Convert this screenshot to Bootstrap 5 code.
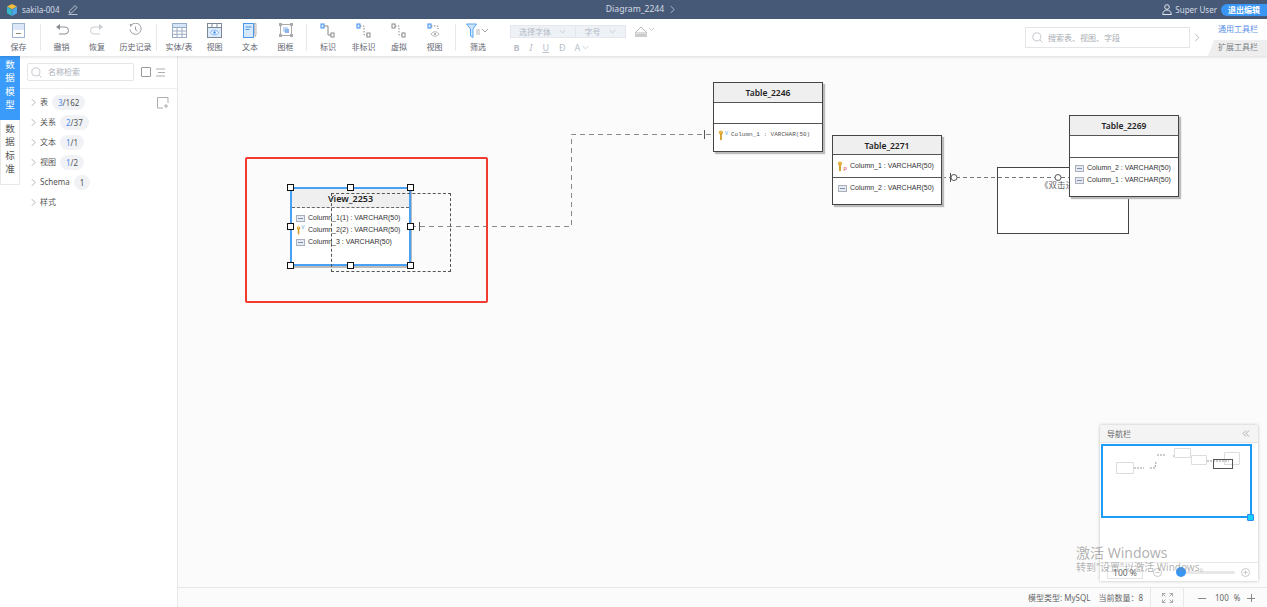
<!DOCTYPE html>
<html lang="zh-CN">
<head>
  <meta charset="UTF-8">
  <title>Diagram_2244</title>
  <link href="https://cdn.jsdelivr.net/npm/bootstrap@5.3.3/dist/css/bootstrap.min.css" rel="stylesheet">
  <style>
    html, body { height: 100%; overflow: hidden; }
    body { font-family: "Noto Sans", "Noto Sans CJK SC", sans-serif; font-size: 8.5px; color: #555; background: #fff; line-height: 1.2; }
    svg { display: block; }

    /* top bar */
    .app-top { height: 19px; background: #465a78; color: #d5dbe5; flex: none; }
    .top-side { flex: 1 1 0; }
    .top-exit { width: 46px; height: 12px; margin-left: 4px; background: #3a96f5; color: #fff; border-radius: 6px 0 0 6px; font-weight: 600; font-size: 8px; line-height: 12px; text-align: center; }

    /* toolbar */
    .app-tools { height: 37px; flex: none; background: #fff; box-shadow: 0 1px 3px rgba(0,0,0,.14); position: relative; z-index: 5; }
    .tool-item { width: 36px; height: 37px; padding-top: 4px; margin-right: -.5px; flex: none; }
    .tool-item.wide { width: 42px; }
    .tool-item.first { width: 37px; }
    .tool-item .tool-ico { height: 17px; }
    .tool-item .tool-txt { margin-top: 2px; font-size: 8px; color: #5f6670; white-space: nowrap; }
    .tool-sep { width: 1px; height: 27px; margin: 5px 3px 0; background: #e8e8e8; flex: none; }
    .font-sel { width: 66px; height: 13px; background: #eef1f6; border: 1px solid #e4e8ee; color: #b4bac4; font-size: 8px; }
    .font-sel.short { width: 50px; border-left: 0; }
    .font-row { color: #b9bec6; font-size: 9px; gap: 10px; padding-left: 4px; margin-top: 3px; height: 14px; }
    .tool-search { width: 165px; height: 21px; border: 1px solid #e3e5e8; color: #a9aeb5; font-size: 8px; padding-left: 6px; gap: 5px; background: #fff; }
    .tool-tabs { width: 59px; height: 37px; margin-left: 8px; }
    .tab-on { height: 21px; padding-top: 5px; padding-left: 10px; color: #5b8fe8; font-size: 8px; }
    .tab-off { height: 16px; padding-top: 2px; padding-left: 10px; color: #7b7f85; font-size: 8px; background: #eee; clip-path: polygon(6px 0, 100% 0, 100% 100%, 0 100%); }

    /* left rail + tree */
    .side-rail { width: 20px; flex: none; background: #fff; }
    .rail-tab { font-size: 9.5px; line-height: 13.3px; text-align: center; padding-top: 2px; height: 65px; border: 1px solid #e8e8e8; border-top: 0; color: #555; }
    .rail-tab.on { height: 64px; background: #3a9bfb; color: #fff; border: 0; }
    .side-tree { width: 158px; flex: none; border-right: 1px solid #e8e8e8; background: #fff; }
    .tree-head { height: 33px; padding: 7px 7px 0; border-bottom: 1px solid #eee; }
    .tree-search { width: 107px; height: 18px; border: 1px solid #e3e5e8; border-radius: 2px; gap: 6px; padding-left: 3px; color: #a9aeb5; font-size: 8px; }
    .tree-check { width: 10px; height: 10px; border: 1px solid #999; border-radius: 1px; margin-left: 7px; }
    .tree-row { height: 20px; padding-left: 11px; gap: 3px; color: #555; font-size: 8px; }
    .tree-row .tree-name { margin-left: 1px; }
    .tree-pill { background: #f0f2f5; color: #555; font-size: 8px; font-weight: 400; padding: 3px 6px; line-height: 9px; margin-left: 1px; }
    .tree-pill b { color: #4d8df0; font-weight: 400; }
    .tree-body { padding-top: 3px; position: relative; }
    .tree-add { position: absolute; left: 137px; top: 8px; }

    /* drawing area */
    .draw-area { background: #fbfbfb; position: relative; overflow: hidden; min-height: 0; }
    .draw-lines { position: absolute; left: 0; top: 0; }
    .er-box { position: absolute; width: 110px; background: #fff; border: 1px solid #444; box-shadow: 2px 2px 1px #bbb; font-family: "Liberation Sans", "Noto Sans CJK SC", sans-serif; color: #333; }
    .er-head { height: 20px; background: #efefef; border-bottom: 1px solid #555; text-align: center; font-family: "Noto Sans", sans-serif; font-weight: 600; font-size: 8.5px; line-height: 19px; color: #222; }
    .er-part { border-bottom: 1px solid #555; }
    .er-col { height: 12px; font-size: 7px; padding-left: 5px; gap: 2px; white-space: nowrap; line-height: 12px; }
    .er-mono { font-family: "Liberation Mono", monospace; font-size: 6px; color: #555; }
    .er-key { width: 11px; flex: none; }
    .er-view { border: 2px solid #4aa0f2; left: 112px; top: 131px; width: 121px; height: 79px; box-shadow: 1px 2px 0 #bbb; }
    .er-view .er-head { height: 19px; border-bottom: 1px dashed #666; font-size: 9px; }
    .er-note { position: absolute; left: 819px; top: 111px; width: 132px; height: 67px; background: #fff; border: 1px solid #444; font-size: 8.5px; padding-top: 12px; color: #666; }
    .er-note-txt { width: 71px; padding-left: 42px; overflow: hidden; white-space: nowrap; }
    .sel-dot { position: absolute; width: 7px; height: 7px; background: #fff; border: 1px solid #111; }
    .sel-ghost { position: absolute; left: 153px; top: 137px; width: 120px; height: 79px; border: 1px dashed #555; }
    .sel-red { position: absolute; left: 67px; top: 101px; width: 243px; height: 146px; border: 2px solid #f23b2f; border-radius: 2px; }

    /* navigator */
    .nav-panel { position: absolute; left: 922px; top: 369px; width: 158px; height: 156px; background: #fff; box-shadow: 0 0 3px rgba(0,0,0,.25); }
    .nav-head { height: 18px; padding: 0 8px 0 7px; background: #f4f4f4; border-bottom: 1px solid #e5e5e5; color: #666; font-size: 8px; }
    .nav-view { position: absolute; left: 1px; top: 19px; width: 151px; height: 74px; border: 2px solid #1e9bf5; }
    .nav-grip { position: absolute; left: 147px; top: 89px; width: 7px; height: 7px; border-radius: 1px; background: #19d3ff; border: 1px solid #2a8af0; }
    .nav-foot { position: absolute; left: 0; right: 0; bottom: 0; height: 19px; border-top: 1px solid #e8e8e8; padding-left: 7px; }
    .nav-zoom { width: 36px; height: 13px; border: 1px solid #e3e3e3; text-align: center; font-size: 8.5px; line-height: 11px; color: #666; }
    .nav-track { width: 59px; height: 3px; margin: 0 6px 0 14px; border-radius: 2px; background: #e8e8e8; position: relative; }
    .nav-thumb { position: absolute; left: 0; top: -4px; width: 10px; height: 10px; border-radius: 50%; background: #3a96f5; }
    .win-mark { position: absolute; left: 898px; top: 488px; color: rgba(130,130,130,.62); white-space: nowrap; pointer-events: none; }
    .win-mark .big { font-size: 14px; line-height: 17px; }
    .win-mark .sub { font-size: 10px; line-height: 13px; }

    /* status bar */
    .app-status { height: 20px; flex: none; border-top: 1px solid #e8e8e8; background: #fbfbfb; color: #666; font-size: 8px; }
    .stat-cell { height: 100%; border-left: 1px solid #e8e8e8; }
  </style>
</head>
<body class="d-flex flex-column">

  <svg width="0" height="0" class="position-absolute">
    <symbol id="i-key" viewBox="0 0 8 12">
      <circle cx="3.4" cy="2.6" r="2.4" fill="#e0a82e"/>
      <path d="M2.4 4h2v6.5l-1 1.2-1-1.2z" fill="#d29a22"/>
      <circle cx="3.4" cy="2" r=".7" fill="#fff3c8"/>
    </symbol>
    <symbol id="i-col" viewBox="0 0 9 7">
      <rect x=".5" y=".5" width="8" height="6" fill="#e6e9f0" stroke="#a9afbd"/>
      <path d="M2 3.5h5" stroke="#7d90b0"/>
    </symbol>
    <symbol id="i-rel" viewBox="0 0 16 16">
      <rect x="1" y="1" width="3" height="4" fill="#dcecff" stroke="#3d8ef0"/>
      <path d="M4 3h4v9h3" fill="none" stroke="#888"/>
      <rect x="11" y="10" width="3" height="4" fill="#fff" stroke="#888"/>
    </symbol>
    <symbol id="i-rel2" viewBox="0 0 16 16">
      <rect x="1" y="1" width="3" height="4" fill="#dcecff" stroke="#3d8ef0"/>
      <path d="M4 3h4v9h3" fill="none" stroke="#888" stroke-dasharray="1.5 1.5"/>
      <rect x="11" y="10" width="3" height="4" fill="#fff" stroke="#888"/>
    </symbol>
    <symbol id="i-rel3" viewBox="0 0 16 16">
      <rect x="1" y="1" width="3" height="4" fill="#fff" stroke="#888"/>
      <path d="M4 3h4v9h3" fill="none" stroke="#888" stroke-dasharray="1.5 1.5"/>
      <rect x="11" y="10" width="3" height="4" fill="#fff" stroke="#888"/>
    </symbol>
    <symbol id="i-chev" viewBox="0 0 6 10">
      <path d="M1 1l4 4-4 4" fill="none" stroke="currentColor" stroke-width=".9"/>
    </symbol>
    <symbol id="i-down" viewBox="0 0 10 6">
      <path d="M1 1l4 4 4-4" fill="none" stroke="currentColor" stroke-width=".9"/>
    </symbol>
    <symbol id="i-find" viewBox="0 0 12 12">
      <circle cx="5.3" cy="5.3" r="4.4" fill="none" stroke="#b7bcc3" stroke-width=".9"/>
      <path d="M8.5 8.5l3 3" stroke="#b7bcc3" stroke-width=".9"/>
    </symbol>
  </svg>

  <!-- top bar -->
  <div class="app-top d-flex align-items-center">
    <div class="top-side d-flex align-items-center" style="padding-left:6px">
      <svg width="12" height="12" viewBox="0 0 12 12">
        <path d="M6 0l5 2.6L6 5.2 1 2.6z" fill="#f1bd3d"/>
        <path d="M1 2.8l4.8 2.6V12L1 9.3z" fill="#35b6c9"/>
        <path d="M11 2.8L6.2 5.4V12L11 9.3z" fill="#4ca6e8"/>
      </svg>
      <span class="ms-1" style="font-size:8px">sakila-004</span>
      <svg class="ms-2" width="10" height="10" viewBox="0 0 10 10">
        <path d="M1 8l.5-2L7 .7 9 2.5 3.5 8zM.5 9.500h9" fill="none" stroke="#d5dbe5" stroke-width=".8"/>
      </svg>
    </div>
    <div class="d-flex align-items-center" style="gap:6px;font-size:8.6px;margin-left:8px">
      <span>Diagram_2244</span>
      <svg width="5" height="9" style="color:#d5dbe5"><use href="#i-chev"/></svg>
    </div>
    <div class="top-side d-flex align-items-center justify-content-end">
      <svg width="10" height="11" viewBox="0 0 10 11" style="margin-right:3px">
        <circle cx="5" cy="3" r="2.3" fill="none" stroke="#e2e6ec"/>
        <path d="M.7 10.500c0-6 8.600-6 8.600 0z" fill="none" stroke="#e2e6ec"/>
      </svg>
      <span style="font-size:8px">Super User</span>
      <div class="top-exit">退出编辑</div>
    </div>
  </div>

  <!-- toolbar -->
  <div class="app-tools d-flex">
    <div class="tool-item first text-center">
      <div class="tool-ico d-flex justify-content-center">
        <svg width="13" height="15" viewBox="0 0 13 15"><rect x=".5" y=".5" width="12" height="14" fill="#fff" stroke="#9fb4d2"/><rect x="1" y="1" width="11" height="6" fill="#dce8f8"/><path d="M4 10.500h5" stroke="#888"/></svg>
      </div>
      <div class="tool-txt">保存</div>
    </div>
    <div class="tool-sep"></div>
    <div class="tool-item text-center">
      <div class="tool-ico d-flex justify-content-center">
        <svg width="14" height="12" viewBox="0 0 14 12"><path d="M5 1L1 4l4 3z" fill="#8a8f96"/><path d="M5 4h5a3 3 0 010 7H4" fill="none" stroke="#8a8f96"/></svg>
      </div>
      <div class="tool-txt">撤销</div>
    </div>
    <div class="tool-item text-center">
      <div class="tool-ico d-flex justify-content-center">
        <svg width="14" height="12" viewBox="0 0 14 12"><path d="M9 1l4 3-4 3z" fill="#c8ccd1"/><path d="M9 4H4a3 3 0 000 7h6" fill="none" stroke="#c8ccd1"/></svg>
      </div>
      <div class="tool-txt">恢复</div>
    </div>
    <div class="tool-item wide text-center">
      <div class="tool-ico d-flex justify-content-center">
        <svg width="13" height="13" viewBox="0 0 13 13"><path d="M2 2.500A5.600 5.600 0 111 6.500" fill="none" stroke="#9a9ea4"/><path d="M.5 1l3 .5-2 2.500z" fill="#9a9ea4"/><path d="M6.500 3.500v3.200l2 1.300" fill="none" stroke="#9a9ea4"/></svg>
      </div>
      <div class="tool-txt">历史记录</div>
    </div>
    <div class="tool-sep" style="margin-left:0;margin-right:4px"></div>
    <div class="tool-item text-center">
      <div class="tool-ico d-flex justify-content-center">
        <svg width="15" height="15" viewBox="0 0 15 15"><rect x=".5" y=".5" width="14" height="14" fill="#fff" stroke="#9aabc4"/><rect x="1" y="1" width="13" height="3" fill="#d6e4f7"/><path d="M.5 4.500h14M.5 8h14M.5 11.300h14M5 4v10.500M10 4v10.500" stroke="#9aabc4" fill="none"/></svg>
      </div>
      <div class="tool-txt">实体/表</div>
    </div>
    <div class="tool-item text-center">
      <div class="tool-ico d-flex justify-content-center">
        <svg width="15" height="15" viewBox="0 0 15 15"><rect x=".5" y=".5" width="14" height="14" fill="#fff" stroke="#7d8896"/><path d="M.5 4.500h14M5 .5v4M10 .5v4" stroke="#7d8896"/><rect x="1" y="5" width="13" height="9" fill="#dcebfb"/><path d="M3.500 9.500c2-3 6-3 8 0-2 3-6 3-8 0z" fill="#fff" stroke="#3d8ef0" stroke-width=".7"/><circle cx="7.500" cy="9.500" r="1.200" fill="#3d8ef0"/></svg>
      </div>
      <div class="tool-txt">视图</div>
    </div>
    <div class="tool-item text-center">
      <div class="tool-ico d-flex justify-content-center">
        <svg width="15" height="15" viewBox="0 0 15 15"><rect x=".5" y=".5" width="10" height="14" fill="#d6e8fb" stroke="#4a97ec"/><path d="M2.500 4h6M2.500 6.500h4" stroke="#4a97ec"/><path d="M13 .5v11l-.7 2-.7-2V.5z" fill="#fff" stroke="#999" stroke-width=".7"/></svg>
      </div>
      <div class="tool-txt">文本</div>
    </div>
    <div class="tool-item text-center">
      <div class="tool-ico d-flex justify-content-center">
        <svg width="14" height="14" viewBox="0 0 14 14"><rect x="1.500" y="1.500" width="11" height="11" fill="#fff" stroke="#aaa"/><rect x="4" y="4" width="5" height="5" fill="#c3d8f3"/><rect x="6" y="6" width="4" height="4" fill="#8cb6ea"/><path d="M0 0h3v3H0zM11 0h3v3h-3zM0 11h3v3H0zM11 11h3v3h-3z" fill="#aaa"/></svg>
      </div>
      <div class="tool-txt">图框</div>
    </div>
    <div class="tool-sep" style="margin-left:3px"></div>
    <div class="tool-item text-center">
      <div class="tool-ico d-flex justify-content-center"><svg width="16" height="16"><use href="#i-rel"/></svg></div>
      <div class="tool-txt">标识</div>
    </div>
    <div class="tool-item text-center">
      <div class="tool-ico d-flex justify-content-center"><svg width="16" height="16"><use href="#i-rel2"/></svg></div>
      <div class="tool-txt">非标识</div>
    </div>
    <div class="tool-item text-center">
      <div class="tool-ico d-flex justify-content-center"><svg width="16" height="16"><use href="#i-rel3"/></svg></div>
      <div class="tool-txt">虚拟</div>
    </div>
    <div class="tool-item text-center">
      <div class="tool-ico d-flex justify-content-center">
        <svg width="16" height="16" viewBox="0 0 16 16"><rect x="1" y="1" width="3" height="4" fill="#dcecff" stroke="#3d8ef0"/><path d="M4 3h7v3" fill="none" stroke="#888" stroke-dasharray="1.500 1.500"/><path d="M4 11c2-3 6-3 8 0-2 3-6 3-8 0z" fill="none" stroke="#999" stroke-width=".7"/><circle cx="8" cy="11" r="1.100" fill="#999"/></svg>
      </div>
      <div class="tool-txt">视图</div>
    </div>
    <div class="tool-sep"></div>
    <div class="tool-item text-center" style="margin-left:1px">
      <div class="tool-ico d-flex justify-content-center">
        <svg width="24" height="15" viewBox="0 0 24 15"><path d="M.5 1h10L7 6v8.500L4.500 13V6z" fill="#cfe4fb" stroke="#4aa0f2" stroke-width=".9"/><path d="M10 7h4M10 9h4M10 11h4" stroke="#999" stroke-width=".7"/><path d="M16 6l3 3 3-3" fill="none" stroke="#888" stroke-width=".8"/></svg>
      </div>
      <div class="tool-txt">筛选</div>
    </div>
    <div style="margin-left:14px;padding-top:6px">
      <div class="d-flex align-items-center">
        <div class="font-sel d-flex align-items-center justify-content-center gap-2">选择字体 <svg width="7" height="5"><use href="#i-down"/></svg></div>
        <div class="font-sel short d-flex align-items-center justify-content-center gap-2">字号 <svg width="7" height="5"><use href="#i-down"/></svg></div>
        <svg class="ms-2" width="21" height="13" viewBox="0 0 21 13"><path d="M1 8l6-6 6 6z" fill="#fff" stroke="#bbb"/><rect x="1" y="9" width="12" height="3" fill="#ccc"/><path d="M15 3l2.500 2.500L20 3" fill="none" stroke="#bbb" stroke-width=".7"/></svg>
      </div>
      <div class="font-row d-flex align-items-center">
        <span class="fw-bold">B</span><span class="fst-italic">I</span><span class="text-decoration-underline">U</span><span>Đ</span>
        <span class="d-flex align-items-center" style="gap:2px;margin-left:-1px">A <svg width="7" height="5"><use href="#i-down"/></svg></span>
      </div>
    </div>
    <div class="ms-auto d-flex align-items-start">
      <div class="tool-search d-flex align-items-center" style="margin-top:8px">
        <svg width="11" height="11"><use href="#i-find"/></svg><span>搜索表、视图、字段</span>
      </div>
      <svg class="ms-1" width="6" height="9" style="margin-top:14px;color:#aaa"><use href="#i-chev"/></svg>
      <div class="tool-tabs">
        <div class="tab-on">通用工具栏</div>
        <div class="tab-off">扩展工具栏</div>
      </div>
    </div>
  </div>

  <div class="d-flex flex-grow-1" style="min-height:0">
    <!-- left rail -->
    <div class="side-rail">
      <div class="rail-tab on">数<br>据<br>模<br>型</div>
      <div class="rail-tab">数<br>据<br>标<br>准</div>
    </div>

    <!-- object tree -->
    <div class="side-tree">
      <div class="tree-head d-flex align-items-start">
        <div class="tree-search d-flex align-items-center"><svg width="11" height="11"><use href="#i-find"/></svg><span>名称检索</span></div>
        <div class="tree-check" style="margin-top:4px"></div>
        <svg class="ms-1" width="11" height="9" viewBox="0 0 11 9" style="margin-top:5px"><path d="M1 1h9M3 4.500h7M1 8h9" stroke="#999" stroke-width=".8"/></svg>
      </div>
      <div class="tree-body">
        <svg class="tree-add" width="12" height="12" viewBox="0 0 12 12"><path d="M11 6V.5H.5v10.500H6" fill="none" stroke="#999" stroke-width=".8"/><path d="M9 7v4M7 9h4" stroke="#999" stroke-width=".8"/></svg>
        <div class="tree-row d-flex align-items-center"><svg width="5" height="9" style="color:#999"><use href="#i-chev"/></svg><span class="tree-name">表</span><span class="badge rounded-pill tree-pill"><b>3</b>/162</span></div>
        <div class="tree-row d-flex align-items-center"><svg width="5" height="9" style="color:#999"><use href="#i-chev"/></svg><span class="tree-name">关系</span><span class="badge rounded-pill tree-pill"><b>2</b>/37</span></div>
        <div class="tree-row d-flex align-items-center"><svg width="5" height="9" style="color:#999"><use href="#i-chev"/></svg><span class="tree-name">文本</span><span class="badge rounded-pill tree-pill"><b>1</b>/1</span></div>
        <div class="tree-row d-flex align-items-center"><svg width="5" height="9" style="color:#999"><use href="#i-chev"/></svg><span class="tree-name">视图</span><span class="badge rounded-pill tree-pill"><b>1</b>/2</span></div>
        <div class="tree-row d-flex align-items-center"><svg width="5" height="9" style="color:#999"><use href="#i-chev"/></svg><span class="tree-name">Schema</span><span class="badge rounded-pill tree-pill">1</span></div>
        <div class="tree-row d-flex align-items-center"><svg width="5" height="9" style="color:#999"><use href="#i-chev"/></svg><span class="tree-name">样式</span></div>
      </div>
    </div>

    <!-- main -->
    <div class="d-flex flex-column flex-grow-1" style="min-width:0">
      <div class="draw-area flex-grow-1">
        <svg class="draw-lines" width="1089" height="531" viewBox="178 56 1089 531">
          <path d="M411 226.500H571.500V134.500H713" fill="none" stroke="#888" stroke-dasharray="5 4"/>
          <path d="M419.500 222v9M704.500 130v9" stroke="#555"/>
        </svg>

        <div class="sel-red"></div>

        <div class="er-note"><div class="er-note-txt">《双击进行</div></div>
        <svg class="draw-lines" width="1089" height="531" viewBox="178 56 1089 531">
          <path d="M942 177.500H1069" fill="none" stroke="#777" stroke-dasharray="4 3"/>
          <path d="M950.500 173v9" stroke="#555"/>
          <circle cx="954" cy="177.500" r="3" fill="#fff" stroke="#555"/>
          <circle cx="1058" cy="177.500" r="3" fill="#fff" stroke="#555"/>
        </svg>

        <div class="er-box" style="left:535px;top:26px">
          <div class="er-head">Table_2246</div>
          <div class="er-part" style="height:21px"></div>
          <div class="er-col er-mono d-flex align-items-center" style="margin-top:5px;padding-left:4px"><svg class="er-key" width="11" height="11" viewBox="0 0 11 11"><use href="#i-key" width="7" height="11"/><text x="7" y="5" font-size="5" fill="#3f9be0">V</text></svg><span>Column_1 : VARCHAR(50)</span></div>
          <div style="height:10px"></div>
        </div>

        <div class="er-box" style="left:654px;top:79px">
          <div class="er-head" style="height:19px">Table_2271</div>
          <div class="er-part" style="height:23px">
            <div class="er-col d-flex align-items-center" style="height:22px;padding-left:4px"><svg class="er-key" width="11" height="11" viewBox="0 0 11 11"><use href="#i-key" width="7" height="11"/><text x="6.500" y="9" font-size="6" fill="#d33">p</text></svg><span>Column_1 : VARCHAR(50)</span></div>
          </div>
          <div class="er-col d-flex align-items-center" style="height:20px"><svg width="9" height="7"><use href="#i-col"/></svg><span style="margin-left:1px">Column_2 : VARCHAR(50)</span></div>
          <div style="height:6px"></div>
        </div>

        <div class="er-box" style="left:891px;top:59px">
          <div class="er-head">Table_2269</div>
          <div class="er-part" style="height:22px"></div>
          <div class="er-col d-flex align-items-center" style="margin-top:4px"><svg width="9" height="7"><use href="#i-col"/></svg><span style="margin-left:1px">Column_2 : VARCHAR(50)</span></div>
          <div class="er-col d-flex align-items-center"><svg width="9" height="7"><use href="#i-col"/></svg><span style="margin-left:1px">Column_1 : VARCHAR(50)</span></div>
          <div style="height:10px"></div>
        </div>

        <div class="er-box er-view">
          <div class="er-head">View_2253</div>
          <div class="er-col d-flex align-items-center" style="margin-top:4px;padding-left:4px"><svg width="9" height="7"><use href="#i-col"/></svg><span style="margin-left:1px">Column_1(1) : VARCHAR(50)</span></div>
          <div class="er-col d-flex align-items-center" style="padding-left:4px"><svg width="9" height="11" viewBox="0 0 9 11"><use href="#i-key" width="6" height="11"/><text x="5.500" y="4" font-size="4.500" fill="#3f9be0">V</text></svg><span style="margin-left:1px">Column_2(2) : VARCHAR(50)</span></div>
          <div class="er-col d-flex align-items-center" style="padding-left:4px"><svg width="9" height="7"><use href="#i-col"/></svg><span style="margin-left:1px">Column_3 : VARCHAR(50)</span></div>
        </div>
        <div class="sel-ghost"></div>
        <div class="sel-dot" style="left:109px;top:128px"></div>
        <div class="sel-dot" style="left:169px;top:128px"></div>
        <div class="sel-dot" style="left:229px;top:128px"></div>
        <div class="sel-dot" style="left:109px;top:167px"></div>
        <div class="sel-dot" style="left:229px;top:167px"></div>
        <div class="sel-dot" style="left:109px;top:206px"></div>
        <div class="sel-dot" style="left:169px;top:206px"></div>
        <div class="sel-dot" style="left:229px;top:206px"></div>

        <!-- navigator -->
        <div class="nav-panel">
          <div class="nav-head d-flex align-items-center justify-content-between">
            <span>导航栏</span>
            <svg width="8" height="7" viewBox="0 0 8 7"><path d="M4 .5L1 3.500l3 3M7 .5L4 3.500l3 3" fill="none" stroke="#999" stroke-width=".8"/></svg>
          </div>
          <svg class="position-absolute" style="left:0;top:0" width="158" height="100" viewBox="1100 425 158 100">
            <path d="M1116.500 462.500h17v11h-17zM1174.500 448.500h16v9h-16zM1191.500 455.500h15v9h-15zM1224.500 452.500h15v12h-15z" fill="#fff" stroke="#ddd"/>
            <path d="M1134 468h10M1150 468h5l1-6M1157 455h9M1173 456h1M1207 461h22" fill="none" stroke="#999" stroke-dasharray="2 1"/>
            <rect x="1213.500" y="459.500" width="19" height="9" fill="none" stroke="#555"/>
          </svg>
          <div class="nav-view"></div>
          <div class="nav-grip"></div>
          <div class="nav-foot d-flex align-items-center">
            <div class="nav-zoom">100 %</div>
            <svg style="margin-left:10px" width="9" height="9" viewBox="0 0 9 9"><circle cx="4.500" cy="4.500" r="4" fill="none" stroke="#bbb" stroke-width=".8"/><path d="M2.500 4.500h4" stroke="#bbb" stroke-width=".8"/></svg>
            <div class="nav-track"><div class="nav-thumb"></div></div>
            <svg width="9" height="9" viewBox="0 0 9 9"><circle cx="4.500" cy="4.500" r="4" fill="none" stroke="#bbb" stroke-width=".8"/><path d="M2.500 4.500h4M4.500 2.500v4" stroke="#bbb" stroke-width=".8"/></svg>
          </div>
        </div>
        <div class="win-mark">
          <div class="big">激活 Windows</div>
          <div class="sub">转到"设置"以激活 Windows。</div>
        </div>
      </div>

      <!-- status bar -->
      <div class="app-status d-flex align-items-center justify-content-end">
        <span style="margin-right:8px">模型类型: MySQL</span>
        <span style="margin-right:7px">当前数量：8</span>
        <div class="stat-cell d-flex align-items-center justify-content-center" style="width:33px">
          <svg width="11" height="10" viewBox="0 0 11 10"><path d="M.5 3.500v-3h3M.5.500l3 3M10.500 3.500v-3h-3M10.500.500l-3 3M.5 6.500v3h3M.5 9.500l3-3M10.500 6.500v3h-3M10.500 9.500l-3-3" fill="none" stroke="#888" stroke-width=".7"/></svg>
        </div>
        <div class="stat-cell d-flex align-items-center" style="width:84px;padding-left:14px">
          <svg width="8" height="8"><path d="M0 4.500h8" stroke="#888"/></svg>
          <span style="margin-left:9px">100</span>
          <span style="margin-left:5px">%</span>
          <svg style="margin-left:7px" width="8" height="8"><path d="M0 4.500h8M4.500 0v8" stroke="#888"/></svg>
        </div>
      </div>
    </div>
  </div>

  <script src="https://cdn.jsdelivr.net/npm/bootstrap@5.3.3/dist/js/bootstrap.bundle.min.js"></script>
</body>
</html>
